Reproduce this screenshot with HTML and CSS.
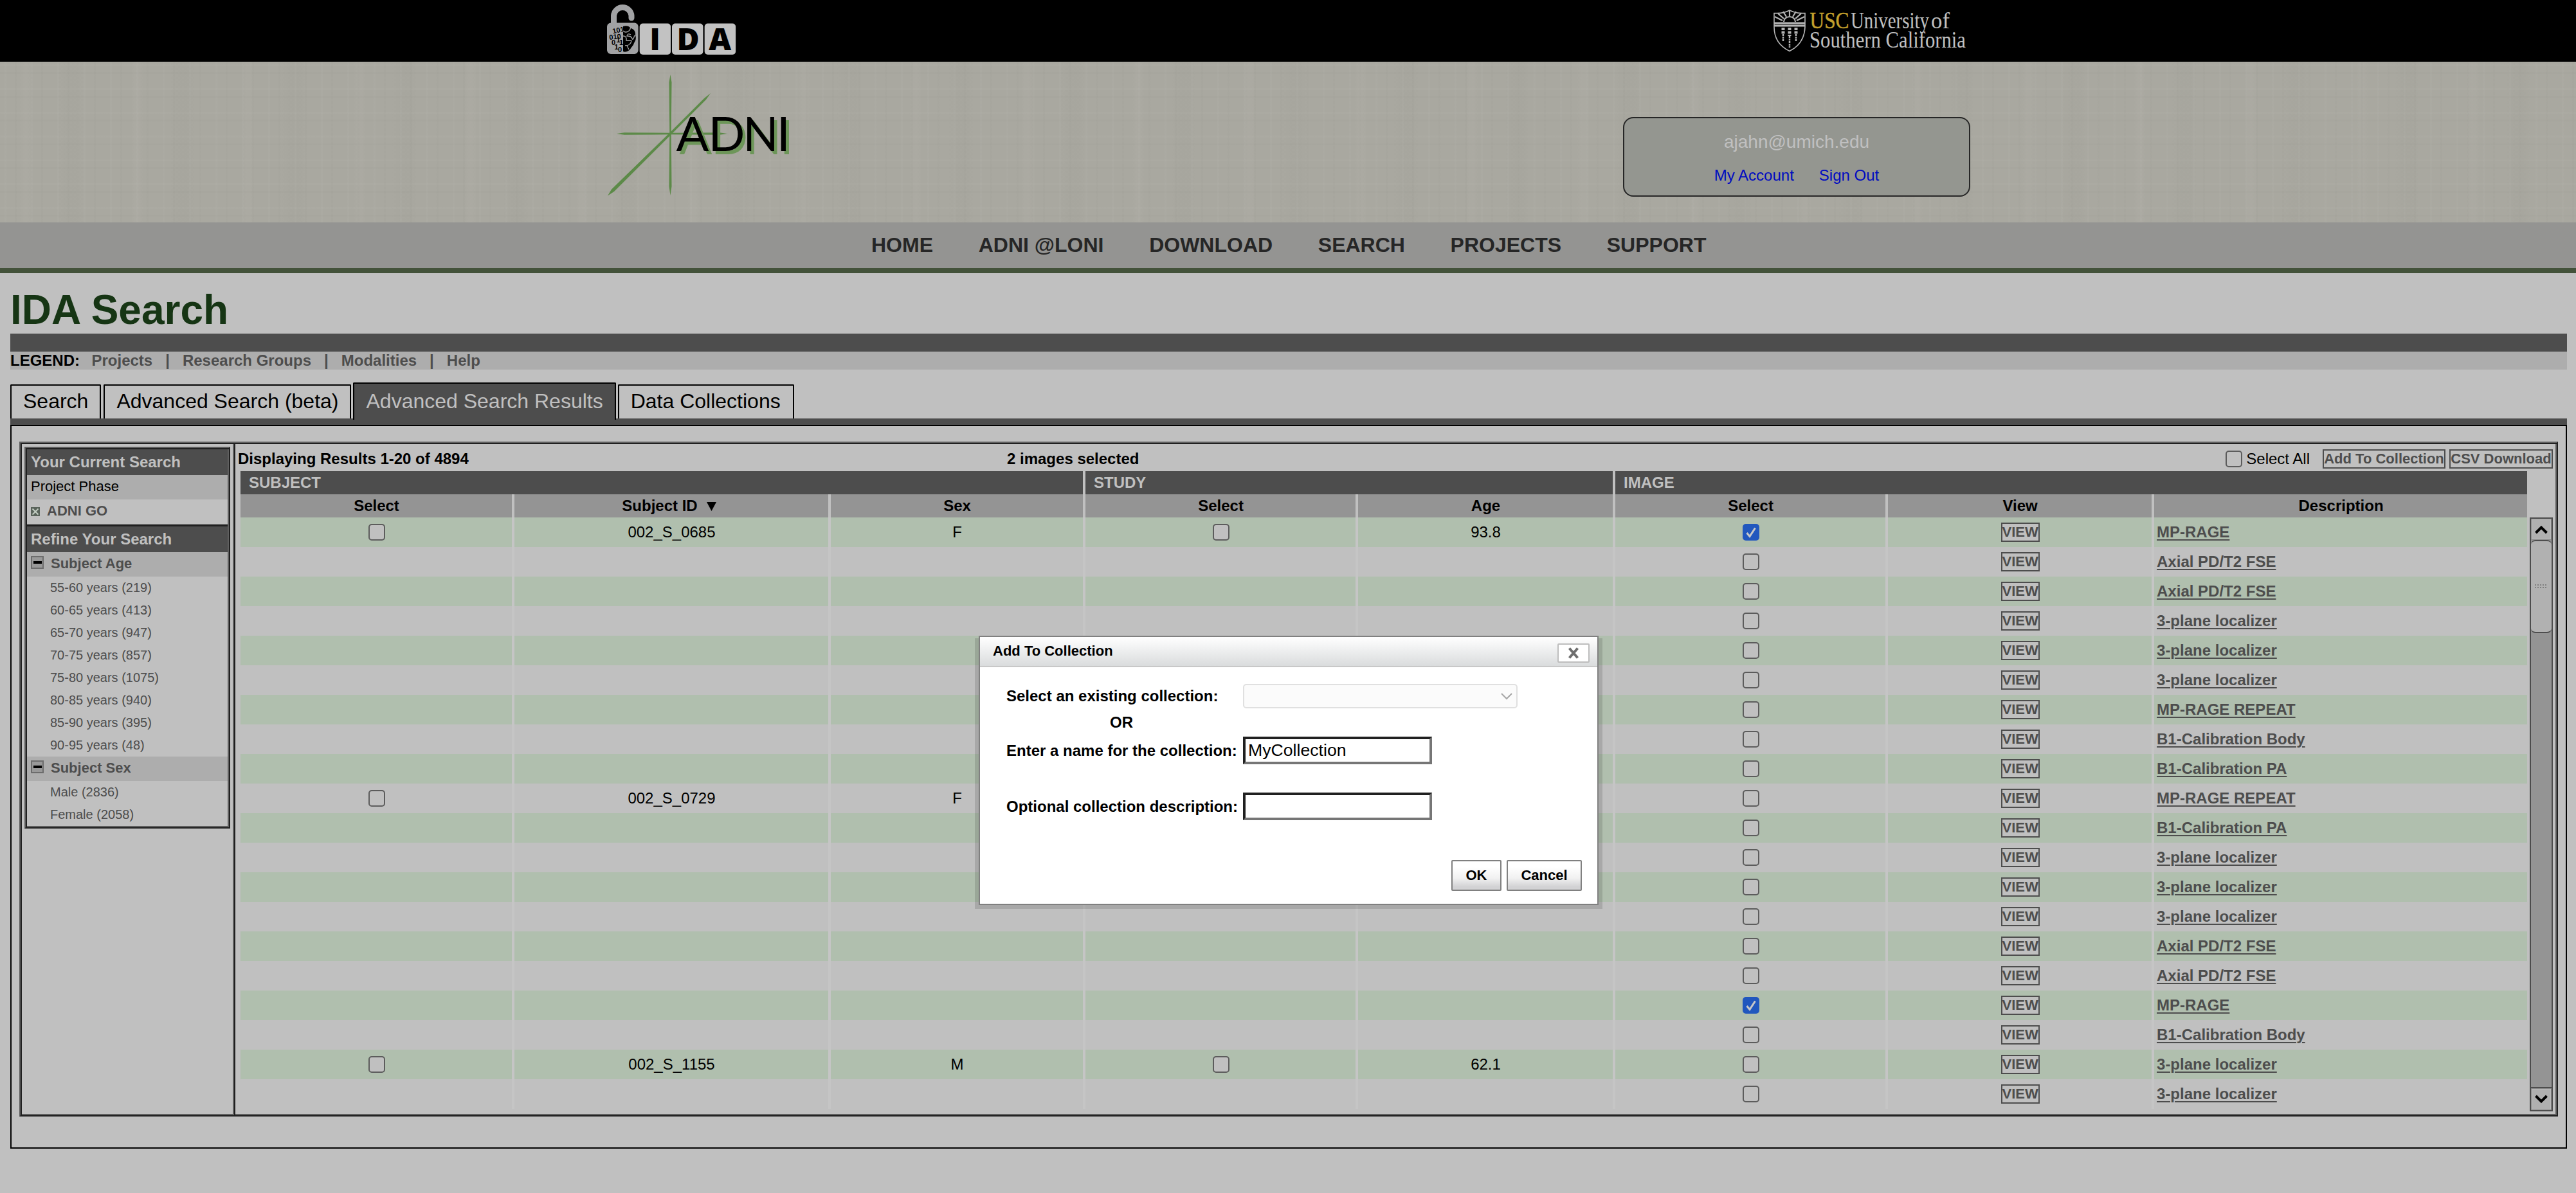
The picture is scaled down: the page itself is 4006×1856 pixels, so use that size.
FILE: index.html
```html
<!DOCTYPE html>
<html lang="en">
<head>
<meta charset="utf-8">
<title>IDA Search</title>
<link rel="stylesheet" href="styles.css">
</head>
<body>
<header class="topbar">
  <div class="wrap topbar-inner">
    <svg class="ida-logo" width="202" height="96" viewBox="943 0 202 96">
      <path d="M954.5 38V24.2a13.8 13.8 0 0 1 27.5 0V28" fill="none" stroke="#a1a2a4" stroke-width="9" stroke-linecap="round"/>
      <rect x="944" y="35.5" width="48.6" height="48.5" rx="6" fill="#a1a2a4"/>
      <rect x="994.7" y="36.5" width="48.4" height="48.5" rx="5" fill="#c2c2c2"/>
      <rect x="1045" y="36.5" width="48.4" height="48.5" rx="5" fill="#c2c2c2"/>
      <rect x="1095.7" y="36.5" width="48.4" height="48.5" rx="5" fill="#c2c2c2"/>
      <g class="ida-letters">
        <text x="1018.5" y="78" text-anchor="middle">I</text>
        <text x="1070" y="78" text-anchor="middle">D</text>
        <text x="1119.8" y="78" text-anchor="middle">A</text>
      </g>
      <g class="ida-bits">
        <text x="952.5" y="51" transform="rotate(-12 960 48)">101</text>
        <text x="947.5" y="61" transform="rotate(-6 957 58)">010</text>
        <text x="951" y="70">0</text><text x="958.5" y="66">1</text><text x="963" y="70">1</text>
        <text x="955.5" y="77">1</text><text x="961" y="80.5">0</text>
      </g>
      <path d="M969 41c5-2 10 0 12 3 5 1 8 6 7 11 2 5 0 9-2 12-1 4-4 6-5 8-2 4-8 7-12 5z" fill="#000"/>
      <path d="M969 48q4 4 9 0q3-3 2-5M981 54q-5-3-6 2q7 0 8 4t4-5M969 56q6 0 5 7h8M982 63q-1 8-10 8M975 71q2 4 3 6" fill="none" stroke="#a1a2a4" stroke-width="1.3"/>
    </svg>
    <svg class="usc-logo" width="308" height="83" viewBox="2756 0 308 83">
      <g fill="none" stroke="#b5b5b5" stroke-width="1.6">
        <path d="M2758 20.5q14 1 24-4.5q10 5.500 24 4.500V42q-1 26-24 37.500Q2758 68 2758 42z"/>
        <path d="M2758 36h48M2758 40h48" stroke-width="3"/>
        <path d="M2773 34a9 8 0 0 1 18 0" stroke-width="2"/>
        <path d="M2782 25v-8M2777 26l-5-8M2787 26l5-8M2773 29l-9-8M2791 29l9-8M2771 32l-12-6M2793 32l12-6" stroke-width="2.200"/>
        <path d="M2772 43v10M2792 43v10M2782 43v13" stroke-width="5" stroke-dasharray="4 1.500"/>
        <path d="M2772 53v12M2792 53v12M2782 56v18" stroke-width="2.500" stroke-dasharray="3 1"/>
      </g>
      <g class="usc-text">
        <text class="gold" x="2813.500" y="43.500" textLength="61" lengthAdjust="spacingAndGlyphs">USC</text>
        <text x="2877" y="43.500" textLength="122" lengthAdjust="spacingAndGlyphs">University</text>
        <text x="3002" y="43.500" textLength="29" lengthAdjust="spacingAndGlyphs">of</text>
        <text x="2813" y="74" textLength="243" lengthAdjust="spacingAndGlyphs">Southern California</text>
      </g>
    </svg>
  </div>
</header>

<section class="banner">
  <div class="wrap banner-inner">
    <svg class="adni-logo" width="290" height="200" viewBox="943 110 290 200">
      <g fill="#5c8a48">
        <path d="M1042.500 116l2 12-.8 80 .8 82-2 14-2-14 .8-82-.8-80z"/>
        <path d="M959 208l12-1.800 72 .6 76-.6 12 1.800-12 1.800-76-.6-72 .6z"/>
        <path d="M1105 145l-7 10-54 54-89 89-10 6.500 6-10 90-87.500 54-54z"/>
      </g>
      <g class="adni-shadow">
        <text x="1056.500" y="239.500" textLength="51" lengthAdjust="spacingAndGlyphs">A</text>
        <text x="1106" y="239.500" textLength="57" lengthAdjust="spacingAndGlyphs">D</text>
        <text x="1160" y="239.500" textLength="55" lengthAdjust="spacingAndGlyphs">N</text>
        <text x="1213" y="239.500">I</text>
      </g>
      <g class="adni-letters">
        <text x="1051.500" y="235" textLength="51" lengthAdjust="spacingAndGlyphs">A</text>
        <text x="1101.500" y="235" textLength="57" lengthAdjust="spacingAndGlyphs">D</text>
        <text x="1155.500" y="235" textLength="55" lengthAdjust="spacingAndGlyphs">N</text>
        <text x="1208" y="235">I</text>
      </g>
    </svg>
    <div class="account">
      <div class="account-mail">ajahn@umich.edu</div>
      <div class="account-links"><a>My Account</a><a>Sign Out</a></div>
    </div>
  </div>
</section>

<nav class="mainnav"><a>HOME</a><a>ADNI @LONI</a><a>DOWNLOAD</a><a>SEARCH</a><a>PROJECTS</a><a>SUPPORT</a></nav>

<main class="page">
  <h1>IDA Search</h1>
  <div class="rule"></div>
  <div class="legend"><b>LEGEND:</b><a>Projects</a><i>|</i><a>Research Groups</a><i>|</i><a>Modalities</a><i>|</i><a>Help</a></div>
  <div class="tabs">
    <a class="tab">Search</a><a class="tab">Advanced Search (beta)</a><a class="tab active">Advanced Search Results</a><a class="tab">Data Collections</a>
  </div>
  <div class="tabrule"></div>
  <div class="panel">
    <div class="group">
      <aside class="side">
        <div class="facets">
          <h2>Your Current Search</h2>
          <div class="phase">Project Phase</div>
          <div class="chosen"><svg width="14" height="14" viewBox="0 0 14 14"><rect width="14" height="14" fill="#59635a"/><path d="M2.500 2.500l9 9M11.500 2.500l-9 9" stroke="#c4cfc4" stroke-width="1.800"/></svg>ADNI GO</div>
          <div class="split"></div>
          <h2>Refine Your Search</h2>
          <h3><span class="minus"></span>Subject Age</h3>
          <ul>
            <li>55-60 years (219)</li><li>60-65 years (413)</li><li>65-70 years (947)</li><li>70-75 years (857)</li>
            <li>75-80 years (1075)</li><li>80-85 years (940)</li><li>85-90 years (395)</li><li>90-95 years (48)</li>
          </ul>
          <h3><span class="minus"></span>Subject Sex</h3>
          <ul><li>Male (2836)</li><li>Female (2058)</li></ul>
        </div>
      </aside>
      <div class="divider"></div>
      <section class="results">
        <div class="toolbar">
          <b class="count">Displaying Results 1-20 of 4894</b>
          <b>2 images selected</b>
          <label class="all"><input type="checkbox">Select All</label>
          <a class="btn add">Add To Collection</a><a class="btn csv">CSV Download</a>
        </div>
        <div class="tablewrap">
          <table>
            <colgroup><col class="c1"><col class="c2"><col class="c3"><col class="c4"><col class="c5"><col class="c6"><col class="c7"><col class="c8"></colgroup>
            <thead>
              <tr class="groups"><th colspan="3">SUBJECT</th><th colspan="2">STUDY</th><th colspan="3">IMAGE</th></tr>
              <tr class="cols"><th>Select</th><th>Subject ID<svg class="sort" width="15" height="14" viewBox="0 0 15 14"><path d="M0 0h15L7.500 14z"/></svg></th><th>Sex</th><th>Select</th><th>Age</th><th>Select</th><th>View</th><th>Description</th></tr>
            </thead>
            <tbody>
              <tr><td><input type="checkbox"></td><td>002_S_0685</td><td>F</td><td><input type="checkbox"></td><td>93.8</td><td><input type="checkbox" checked></td><td><a class="view">VIEW</a></td><td><a>MP-RAGE</a></td></tr>
              <tr><td></td><td></td><td></td><td></td><td></td><td><input type="checkbox"></td><td><a class="view">VIEW</a></td><td><a>Axial PD/T2 FSE</a></td></tr>
              <tr><td></td><td></td><td></td><td></td><td></td><td><input type="checkbox"></td><td><a class="view">VIEW</a></td><td><a>Axial PD/T2 FSE</a></td></tr>
              <tr><td></td><td></td><td></td><td></td><td></td><td><input type="checkbox"></td><td><a class="view">VIEW</a></td><td><a>3-plane localizer</a></td></tr>
              <tr><td></td><td></td><td></td><td></td><td></td><td><input type="checkbox"></td><td><a class="view">VIEW</a></td><td><a>3-plane localizer</a></td></tr>
              <tr><td></td><td></td><td></td><td></td><td></td><td><input type="checkbox"></td><td><a class="view">VIEW</a></td><td><a>3-plane localizer</a></td></tr>
              <tr><td></td><td></td><td></td><td></td><td></td><td><input type="checkbox"></td><td><a class="view">VIEW</a></td><td><a>MP-RAGE REPEAT</a></td></tr>
              <tr><td></td><td></td><td></td><td></td><td></td><td><input type="checkbox"></td><td><a class="view">VIEW</a></td><td><a>B1-Calibration Body</a></td></tr>
              <tr><td></td><td></td><td></td><td></td><td></td><td><input type="checkbox"></td><td><a class="view">VIEW</a></td><td><a>B1-Calibration PA</a></td></tr>
              <tr><td><input type="checkbox"></td><td>002_S_0729</td><td>F</td><td></td><td></td><td><input type="checkbox"></td><td><a class="view">VIEW</a></td><td><a>MP-RAGE REPEAT</a></td></tr>
              <tr><td></td><td></td><td></td><td></td><td></td><td><input type="checkbox"></td><td><a class="view">VIEW</a></td><td><a>B1-Calibration PA</a></td></tr>
              <tr><td></td><td></td><td></td><td></td><td></td><td><input type="checkbox"></td><td><a class="view">VIEW</a></td><td><a>3-plane localizer</a></td></tr>
              <tr><td></td><td></td><td></td><td></td><td></td><td><input type="checkbox"></td><td><a class="view">VIEW</a></td><td><a>3-plane localizer</a></td></tr>
              <tr><td></td><td></td><td></td><td></td><td></td><td><input type="checkbox"></td><td><a class="view">VIEW</a></td><td><a>3-plane localizer</a></td></tr>
              <tr><td></td><td></td><td></td><td></td><td></td><td><input type="checkbox"></td><td><a class="view">VIEW</a></td><td><a>Axial PD/T2 FSE</a></td></tr>
              <tr><td></td><td></td><td></td><td></td><td></td><td><input type="checkbox"></td><td><a class="view">VIEW</a></td><td><a>Axial PD/T2 FSE</a></td></tr>
              <tr><td></td><td></td><td></td><td></td><td></td><td><input type="checkbox" checked></td><td><a class="view">VIEW</a></td><td><a>MP-RAGE</a></td></tr>
              <tr><td></td><td></td><td></td><td></td><td></td><td><input type="checkbox"></td><td><a class="view">VIEW</a></td><td><a>B1-Calibration Body</a></td></tr>
              <tr><td><input type="checkbox"></td><td>002_S_1155</td><td>M</td><td><input type="checkbox"></td><td>62.1</td><td><input type="checkbox"></td><td><a class="view">VIEW</a></td><td><a>3-plane localizer</a></td></tr>
              <tr><td></td><td></td><td></td><td></td><td></td><td><input type="checkbox"></td><td><a class="view">VIEW</a></td><td><a>3-plane localizer</a></td></tr>
            </tbody>
          </table>
          <div class="scroll">
            <div class="arrow"><svg width="20" height="14" viewBox="0 0 20 14"><path d="M1.500 12L10 3.500l8.500 8.500" fill="none" stroke="#000" stroke-width="4"/></svg></div>
            <div class="thumb"><span class="grip"></span></div>
            <div class="arrow down"><svg width="20" height="14" viewBox="0 0 20 14"><path d="M1.500 2L10 10.500 18.500 2" fill="none" stroke="#000" stroke-width="4"/></svg></div>
          </div>
        </div>
      </section>
    </div>
  </div>
</main>

<div class="dialog-shadow">
  <div class="dialog">
    <div class="dialog-head"><span>Add To Collection</span><span class="close"><svg width="20" height="18" viewBox="0 0 20 18"><path d="M3.500 1.500l13 15M16.500 1.500l-13 15" stroke="#6e6e6e" stroke-width="4"/></svg></span></div>
    <div class="form">
      <label>Select an existing collection:</label>
      <div class="select"><svg width="18" height="11" viewBox="0 0 18 11"><path d="M1 1l8 8 8-8" fill="none" stroke="#a6a6a6" stroke-width="2"/></svg></div>
      <label class="or">OR</label><span></span>
      <label>Enter a name for the collection:</label><input type="text" value="MyCollection">
      <span></span><span></span>
      <label>Optional collection description:</label><input type="text">
    </div>
    <div class="actions"><button class="ok">OK</button><button class="cancel">Cancel</button></div>
  </div>
</div>
</body>
</html>
```
FILE: styles.css
```css
* { box-sizing: border-box; }
body {
  margin: 0;
  width: 4006px;
  height: 1856px;
  overflow: hidden;
  position: relative;
  background: #c0c0c0;
  color: #000;
  font: 24px "Liberation Sans", Arial, sans-serif;
}
h1, h2, h3, ul { margin: 0; padding: 0; list-style: none; }
svg { display: block; flex: none; overflow: visible; }
svg text { white-space: pre; }

.wrap { width: 2122px; margin-left: 943px; display: flex; justify-content: space-between; }
.topbar { height: 96px; background: #000; }
.topbar-inner { align-items: flex-start; }
.ida-letters { font: 800 48px "Open Sans", sans-serif; }
.ida-bits { font: 700 11px "Liberation Sans", sans-serif; }
.usc-text { font: 35px "Liberation Serif", serif; fill: #c0c0c0; }
.usc-text .gold { fill: #c3a02d; stroke: #c3a02d; stroke-width: .5px; }

.banner {
  height: 250px;
  background:
    repeating-linear-gradient(90deg, transparent 0 7px, rgba(190,190,185,.08) 7px 10px, transparent 10px 23px, rgba(140,140,132,.06) 23px 26px, transparent 26px 41px),
    repeating-linear-gradient(90deg, transparent 0 31px, rgba(200,195,190,.07) 37px 43px, transparent 50px 90px, rgba(140,140,132,.06) 105px 120px, transparent 130px 173px),
    repeating-linear-gradient(0deg, transparent 0 9px, rgba(140,140,132,.07) 9px 12px, transparent 12px 21px, rgba(195,195,188,.07) 21px 24px, transparent 24px 37px),
    #a9a8a0;
}
.banner-inner { align-items: flex-start; }
.adni-logo { margin-top: 14px; }
.adni-letters, .adni-shadow { font: 400 74px Lato, sans-serif; }
.adni-shadow { fill: #6d9659; }
.account {
  width: 540px;
  height: 124px;
  margin: 86px 1px 0 0;
  border: 2px solid #262626;
  border-radius: 16px;
  background: #949690;
  text-align: center;
}
.account-mail { margin-top: 20px; font-size: 28px; line-height: 33px; color: #c0c0c0; }
.account-links { display: flex; justify-content: center; gap: 39px; margin-top: 20px; line-height: 32px; color: #000bc0; }

.mainnav {
  height: 79px;
  background: #949492;
  border-bottom: 8px solid #43523a;
  display: flex;
  gap: 70.700px;
  padding-left: 1355px;
  font: bold 32px/70px "Liberation Sans", Arial, sans-serif;
  color: #262626;
}

.page { padding: 0 14px 0 16px; }
h1 { padding-top: 20px; height: 94px; font-size: 64px; line-height: 75px; color: #163514; }
.rule { height: 28px; background: #4d4d4d; }
.legend { height: 28px; background: #adadad; display: flex; font-weight: bold; line-height: 28px; color: #4d4d4d; }
.legend b { color: #000; margin-right: 18.500px; }
.legend i { font-style: normal; margin: 0 20px; }

.tabs { height: 76px; display: flex; align-items: flex-end; gap: 4px; font-size: 32px; }
.tab { height: 53px; padding: 0 18px; border: 2px solid #000; border-bottom: 0; border-radius: 2px 2px 0 0; line-height: 48px; white-space: nowrap; }
.tab.active { height: 58px; margin: 0 -1px -2px; padding-top: 3px; background: #4d4d4d; color: #c0c0c0; }
.tab:last-child { padding-right: 19px; }
.tabrule { height: 10px; background: #4d4d4d; }
.panel { height: 1126px; border: 2px solid #000; padding: 24px 12px 0; }
.group {
  height: 1050px;
  display: flex;
  padding: 2px;
  border: 2px solid;
  border-color: #5f5f5f #202020 #202020 #5f5f5f;
  box-shadow: inset 2px 2px #202020, inset -2px -2px #5f5f5f;
}
.side { width: 328px; padding: 4px; }
.facets {
  width: 320px;
  padding: 2px;
  border: 2px solid;
  border-color: #5f5f5f #202020 #202020 #5f5f5f;
  box-shadow: inset 2px 2px #202020, inset -2px -2px #5f5f5f;
}
h2 { height: 40px; padding-left: 6px; background: #4d4d4d; color: #c0c0c0; font-size: 24px; line-height: 39px; }
.phase { height: 38px; padding-left: 6px; background: #adadad; font-size: 22px; line-height: 36px; }
.chosen { height: 38px; padding-left: 6px; display: flex; gap: 11px; font-weight: bold; font-size: 22px; line-height: 36px; color: #4d4d4d; }
.chosen svg { margin-top: 12px; }
.split { height: 4px; background: linear-gradient(#5f5f5f 50%, #202020 50%); }
h3 { height: 38px; padding-left: 6px; display: flex; gap: 11px; background: #adadad; color: #4d4d4d; font-size: 22px; line-height: 36px; }
.minus { width: 20px; height: 20px; margin-top: 6px; border: 2px solid #6c6c6c; background: linear-gradient(#000, #000) center / 13px 4px no-repeat, #999; }
li { height: 35px; padding-left: 36px; font-size: 20px; line-height: 35px; color: #4d4d4d; }
.divider { width: 4px; margin-bottom: -2px; background: linear-gradient(90deg, #5f5f5f 50%, #202020 50%); }

.results { flex: 1; padding-left: 3px; }
.toolbar { height: 42px; padding: 4px 4px 0 1px; display: flex; align-items: center; }
.count { width: 1196px; }
.all { display: flex; align-items: center; gap: 6px; margin: 0 20px 0 auto; }
.btn { height: 30px; border: 2px solid #4d4d4d; color: #4d4d4d; font: bold 22px/25px "Liberation Sans", Arial, sans-serif; text-align: center; white-space: nowrap; }
.add { width: 191px; margin-right: 6px; }
.csv { width: 161px; }
.tablewrap { display: flex; align-items: flex-start; padding-left: 5px; }
table { flex: none; width: 3556px; table-layout: fixed; border-spacing: 0; }
.c1 { width: 426px; } .c2 { width: 492px; } .c3 { width: 396px; } .c4 { width: 424px; }
.c5 { width: 400px; } .c6 { width: 424px; } .c7 { width: 414px; } .c8 { width: 580px; }
th { height: 36px; padding: 0 0 0 1px; line-height: 36px; }
th, td { border-right: 4px solid #c0c0c0; }
th:last-child, td:last-child { border-right: 0; }
tbody td { border-color: #c5c5c5; }
.groups th { background: #4d4d4d; color: #c0c0c0; text-align: left; padding-left: 13px; }
.cols th { background: #949494; }
.sort { display: inline-block; margin: 0 8px 0 14px; }
td { height: 46px; padding: 0 0 0 1px; line-height: 46px; text-align: center; vertical-align: middle; }
tbody tr:nth-child(odd) td { background: #b0bfae; }
td:last-child { padding-left: 4px; text-align: left; font-weight: bold; color: #4d4d4d; }
td:last-child a { text-decoration: underline; text-decoration-thickness: 2px; text-underline-offset: 3px; }
.view { display: block; width: 60px; height: 30px; margin: 0 auto; border: 2px solid #4d4d4d; background: #c0c0c0; color: #4d4d4d; font: bold 22px/25px "Liberation Sans", Arial, sans-serif; }
input[type="checkbox"] { appearance: none; display: block; width: 26px; height: 26px; margin: 0 auto; border: 2px solid #5c5c5c; border-radius: 5px; background: #c0c0c0; }
input[type="checkbox"]:checked {
  border-color: #2157be;
  background: #2157be url("data:image/svg+xml,%3Csvg xmlns='http://www.w3.org/2000/svg' viewBox='0 0 22 22'%3E%3Cpath d='M4.500 12l4.500 5.500 8.500-13' fill='none' stroke='%23c8c8c8' stroke-width='3'/%3E%3C/svg%3E") center / 22px;
}

.scroll { width: 36px; height: 924px; margin: 72px 0 0 4px; border: 2px solid #4d4d4d; background: #949494; display: flex; flex-direction: column; }
.arrow { height: 33px; display: flex; align-items: center; justify-content: center; background: #b0b0b0; box-shadow: inset 0 0 0 1px #8a8a8a, inset 0 0 0 2px #bcbcbc; }
.arrow.down { height: 34px; margin-top: auto; outline: 2px solid #4d4d4d; }
.thumb { height: 145px; border: 2px solid #4d4d4d; border-width: 2px 0; border-radius: 7px; background: #b1b1b1; display: flex; align-items: center; justify-content: center; }
.grip { width: 20px; height: 8px; background: repeating-linear-gradient(90deg, transparent 0 2px, #b1b1b1 2px 4px), repeating-linear-gradient(#808080 0 2px, #b1b1b1 2px 4px); }

/* the dialog floats over the page; its shadow shows on three sides */
.dialog-shadow { position: absolute; left: 1516px; top: 993px; width: 976px; height: 421px; background: rgba(0,0,0,.12); }
.dialog { width: 964px; height: 419px; margin: -4px 0 0 6px; border: 2px solid #808080; background: #fff; font-weight: bold; }
.dialog-head { height: 47px; padding: 0 12px 0 20px; display: flex; justify-content: space-between; border-bottom: 2px solid #c8c8c8; background: linear-gradient(#fff, #dadcdd); font-size: 22px; line-height: 43px; }
.close { width: 50px; height: 30px; margin-top: 10px; border: 2px solid #bdbdbd; border-radius: 2px; background: #fff; display: flex; align-items: center; justify-content: center; }
.form { padding: 26px 0 0 41px; display: grid; grid-template-columns: 368px auto; grid-template-rows: 38px 44px 43px 44px 43px; align-items: center; justify-items: start; white-space: nowrap; }
.or { padding-left: 161px; }
.select { width: 427px; height: 38px; padding-right: 6px; border: 2px solid #e0e0e0; border-radius: 5px; background: #fbfbfb; display: flex; align-items: center; justify-content: flex-end; }
input[type="text"] { width: 294px; height: 43px; padding: 0 4px; border: 4px solid; border-color: #202020 #767676 #767676 #202020; background: #fff; font: 26.667px "Liberation Sans", Arial, sans-serif; outline: 0; }
.actions { display: flex; justify-content: flex-end; gap: 8px; padding: 62px 24px 0 0; }
button { height: 48px; padding: 0 0 1px; border: 2px solid #808080; border-radius: 2px; background: linear-gradient(#fff 20%, #f1f1f1 60%, #d2d2d4 90%); color: #000; font: bold 22px "Liberation Sans", Arial, sans-serif; }
.ok { width: 78px; }
.cancel { width: 117px; }
```
